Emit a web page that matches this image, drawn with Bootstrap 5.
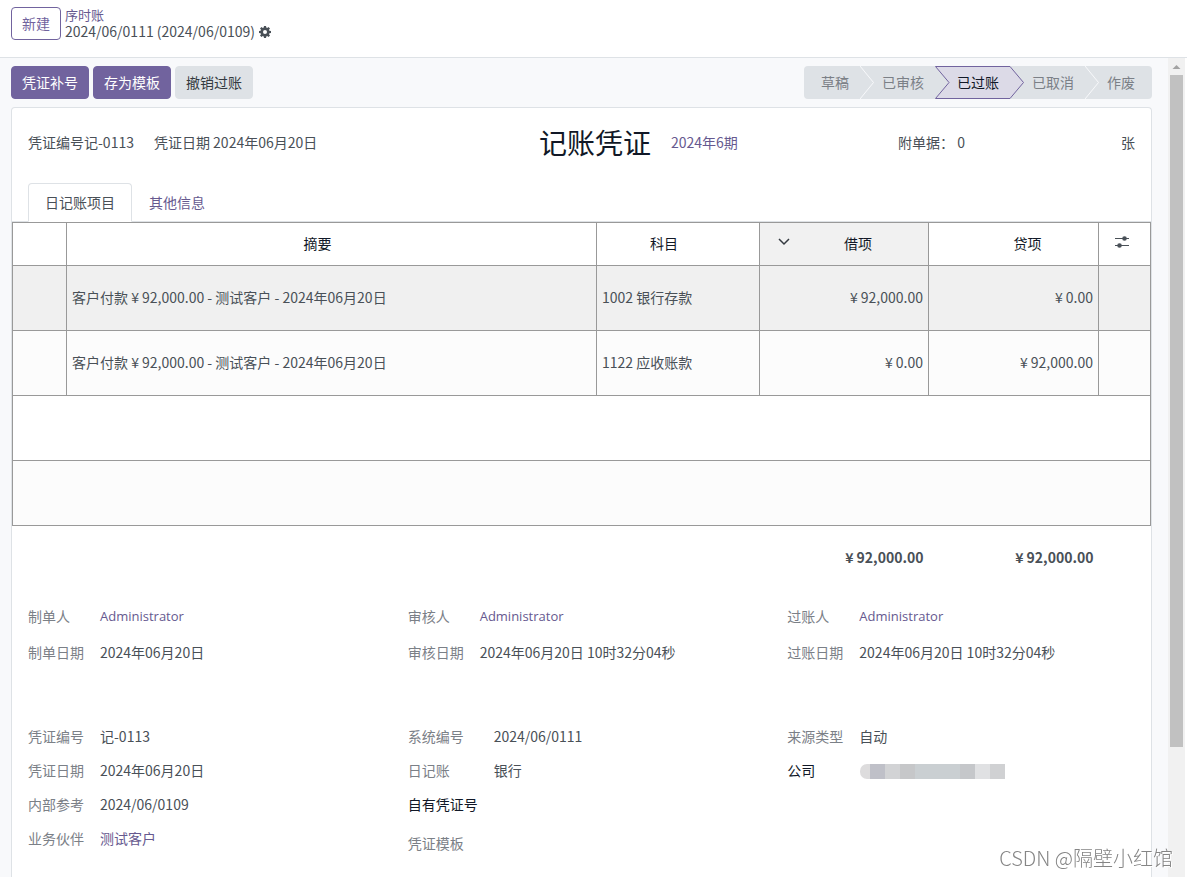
<!DOCTYPE html>
<html lang="zh-CN">
<head>
<meta charset="utf-8">
<meta name="viewport" content="width=device-width, initial-scale=1">
<title>记账凭证</title>
<link href="https://cdn.jsdelivr.net/npm/bootstrap@5.3.0/dist/css/bootstrap.min.css" rel="stylesheet">
<style>
:root { --brand: #71639e; --brand-link: #66598f; --line: #dee2e6; --ink: #495057; --grid: #999; }
body { font-family: "Noto Sans CJK SC", sans-serif; font-size: 14px; line-height: 20px; color: var(--ink); }
a { color: var(--brand-link); text-decoration: none; }
.top-bar { height: 58px; padding: 7px 11px; border-bottom: 1px solid var(--line); gap: 4px; }
.btn { font-size: 14px; line-height: 21px; padding: 5px 10px; border-radius: 4px; white-space: nowrap; }
.btn-brand { --bs-btn-color: #fff; --bs-btn-bg: var(--brand); --bs-btn-border-color: var(--brand); --bs-btn-hover-color: #fff; --bs-btn-hover-bg: #5f5387; }
.btn-brand-outline { --bs-btn-color: var(--brand); --bs-btn-border-color: var(--brand); --bs-btn-bg: #fff; --bs-btn-hover-color: #fff; --bs-btn-hover-bg: var(--brand); }
.btn-soft { --bs-btn-color: #343a40; --bs-btn-bg: var(--line); --bs-btn-border-color: var(--line); --bs-btn-hover-bg: #ced4da; }
.crumbs { line-height: 17px; margin-top: -1px; }
.crumb-parent { font-size: 13px; }
.icon-btn { border: 0; padding: 0; background: none; color: var(--ink); line-height: 1; }
.workspace { background: #f8f9fb; padding: 8px 16px 0 11px; }
.action-group { gap: 4px; }
.status-bar { background: var(--line); border-radius: 4px; height: 33px; }
.status-step { position: relative; border: 0; background: none; padding: 0 11px 2px 22px; color: #7b8087; }
.status-step:first-child { padding-left: 17px; }
.status-step:last-child { padding-right: 17px; }
.status-step svg { position: absolute; top: 0; right: -14px; z-index: 1; }
.status-step span { position: relative; z-index: 2; }
.status-step.current { color: #111827; }
.sheet { margin-top: 8px; background: #fff; border: 1px solid var(--line); border-bottom: 0; border-radius: 4px 4px 0 0; }
.sheet-head { display: grid; grid-template-columns: 511fr 359fr 237fr; align-items: center; height: 67px; padding: 0 16px; }
.sheet-title { font-size: 28px; line-height: 34px; color: #111827; font-weight: 400; margin: 0; }
.gap-20 { gap: 20px; }
.nav-tabs { padding: 0 16px; margin-top: 8px; --bs-nav-tabs-border-radius: 4px; --bs-nav-link-color: var(--brand-link); --bs-nav-tabs-link-active-color: var(--ink); }
.nav-tabs .nav-link { padding: 8px 16px; line-height: 21px; }
.entries { table-layout: fixed; width: 100%; border-collapse: collapse; }
.entries thead th, .entries tbody td { border: 1px solid var(--grid); }
.entries th { font-weight: 400; color: #111827; text-align: center; height: 43px; padding: 0 0 2px; }
.entries td { height: 65px; padding: 0 5px 2px; }
.entries .head-left { padding-right: 28px; }
.entries .head-right { padding-left: 28px; }
.entries .head-options { padding-right: 6px; }
.entries .sorted { background: #f1f1f1; position: relative; }
.sorted svg { position: absolute; left: 18px; top: 15px; }
.row-hover { background: #f0f0f0; }
.row-alt { background: #fcfcfc; }
.col-handle { width: 54px; } .col-account { width: 163px; } .col-debit { width: 169px; } .col-credit { width: 170px; } .col-options { width: 52px; }
.field-area { display: grid; grid-template-columns: repeat(3, minmax(0, 1fr)); column-gap: 32px; padding: 7px 16px 0; }
.field-area + .field-area { padding-top: 49px; }
.fields { display: grid; grid-template-columns: auto 1fr; column-gap: 16px; grid-auto-rows: 34px; align-content: start; align-items: center; margin: 0; }
.fields.roomy { grid-auto-rows: 36px; }
.fields.last-tall { grid-template-rows: repeat(3, 34px) 44px; }
.fields dt { font-weight: 400; color: #7b8087; white-space: nowrap; }
.fields dt.editable { color: #111827; }
.fields dd { margin: 0; }
.user-name { font-family: "Open Sans", sans-serif; font-size: 13px; }
.masked { width: 145px; height: 15px; margin: 4px 0 0 1px; border-radius: 7px 0 0 7px; background: linear-gradient(90deg, #dddcdd 10px, #bfc0c8 10px 25px, #d2d3d5 25px 40px, #c6c7c9 40px 55px, #cacfd2 55px 100px, #c5c7ca 100px 115px, #e0e1e3 115px 130px, #d0d1d3 130px); }
.scroll-track { width: 17px; margin-right: 2px; background: #f1f1f1; padding: 0 2px; }
.scroll-track svg { display: block; margin: 0 auto; }
.scroll-thumb { background: #c1c1c1; height: 82%; }
.watermark { position: fixed; right: 14px; bottom: 7px; z-index: 5; font-size: 20px; line-height: 24px; color: #858585; font-weight: 300; pointer-events: none; text-shadow: 1px 1px 0 #fff; }
</style>
</head>
<body class="vh-100 d-flex flex-column overflow-hidden">
<header class="top-bar d-flex align-items-start flex-shrink-0">
  <button type="button" class="btn btn-brand-outline">新建</button>
  <nav class="crumbs">
    <a class="crumb-parent d-block" href="#">序时账</a>
    <div class="d-flex align-items-center gap-1">
      <span>2024/06/0111 (2024/06/0109)</span>
      <button type="button" class="icon-btn" aria-label="设置">
        <svg class="d-block" width="12" height="12" viewBox="0 0 12 12"><path fill="currentColor" fill-rule="evenodd" d="M5 0h2l.3 1.6.9.4L9.500 1 11 2.500l-1 1.300.4.900L12 5v2l-1.600.3-.4.900 1 1.300L9.500 11l-1.300-1-.9.400L7 12H5l-.3-1.600-.9-.4-1.300 1L1 9.500l1-1.300-.4-.9L0 7V5l1.600-.3.4-.9-1-1.300L2.500 1l1.300 1 .9-.4zM6 4a2 2 0 1 0 0 4 2 2 0 0 0 0-4z"/></svg>
      </button>
    </div>
  </nav>
</header>
<div class="d-flex flex-grow-1 overflow-hidden">
  <main class="workspace flex-grow-1 d-flex flex-column overflow-hidden">
    <div class="d-flex justify-content-between">
      <div class="action-group d-flex">
        <button type="button" class="btn btn-brand">凭证补号</button>
        <button type="button" class="btn btn-brand">存为模板</button>
        <button type="button" class="btn btn-soft">撤销过账</button>
      </div>
      <div class="status-bar d-flex">
        <button type="button" class="status-step"><span>草稿</span><svg width="14" height="33"><path d="M0 0L13.500 16.500 0 33" fill="none" stroke="#f8f9fb"/></svg></button>
        <button type="button" class="status-step"><span>已审核</span></button>
        <button type="button" class="status-step current"><svg width="89" height="33"><path d="M.5.5H75L88.500 16.500 75 32.500H.5L14 16.500z" fill="#dcdae7" stroke="#71639e"/></svg><span>已过账</span></button>
        <button type="button" class="status-step"><span>已取消</span><svg width="14" height="33"><path d="M0 0L13.500 16.500 0 33" fill="none" stroke="#f8f9fb"/></svg></button>
        <button type="button" class="status-step"><span>作废</span></button>
      </div>
    </div>
    <section class="sheet flex-grow-1">
      <div class="sheet-head">
        <div class="d-flex gap-20"><span>凭证编号记-0113</span><span>凭证日期 2024年06月20日</span></div>
        <div class="d-flex align-items-center gap-20"><h1 class="sheet-title">记账凭证</h1><a href="#">2024年6期</a></div>
        <div class="d-flex justify-content-between"><span>附单据： 0</span><span>张</span></div>
      </div>
      <ul class="nav nav-tabs">
        <li class="nav-item"><a class="nav-link active" href="#">日记账项目</a></li>
        <li class="nav-item"><a class="nav-link" href="#">其他信息</a></li>
      </ul>
      <table class="entries">
        <colgroup><col class="col-handle"><col><col class="col-account"><col class="col-debit"><col class="col-credit"><col class="col-options"></colgroup>
        <thead>
          <tr>
            <th></th><th class="head-left">摘要</th><th class="head-left">科目</th>
            <th class="head-right sorted"><svg width="12" height="8"><path d="M1 1l5 5 5-5" fill="none" stroke="#343a40" stroke-width="1.500"/></svg>借项</th>
            <th class="head-right">贷项</th>
            <th class="head-options"><button type="button" class="icon-btn" aria-label="可选列"><svg class="d-block" width="14" height="14" viewBox="0 0 14 14"><path d="M0 3.500h14M0 10.500h14" stroke="currentColor"/><circle cx="9.500" cy="3.500" r="2.300" fill="currentColor"/><circle cx="4.500" cy="10.500" r="2.300" fill="currentColor"/></svg></button></th>
          </tr>
        </thead>
        <tbody>
          <tr class="row-hover"><td></td><td>客户付款 ¥ 92,000.00 - 测试客户 - 2024年06月20日</td><td>1002 银行存款</td><td class="text-end">¥ 92,000.00</td><td class="text-end">¥ 0.00</td><td></td></tr>
          <tr class="row-alt"><td></td><td>客户付款 ¥ 92,000.00 - 测试客户 - 2024年06月20日</td><td>1122 应收账款</td><td class="text-end">¥ 0.00</td><td class="text-end">¥ 92,000.00</td><td></td></tr>
          <tr><td colspan="6"></td></tr>
          <tr class="row-alt"><td colspan="6"></td></tr>
        </tbody>
        <tfoot>
          <tr class="fw-bold"><td colspan="3"></td><td class="text-end">¥ 92,000.00</td><td class="text-end">¥ 92,000.00</td><td></td></tr>
        </tfoot>
      </table>
      <div class="field-area">
        <dl class="fields roomy"><dt>制单人</dt><dd><a class="user-name" href="#">Administrator</a></dd><dt>制单日期</dt><dd>2024年06月20日</dd></dl>
        <dl class="fields roomy"><dt>审核人</dt><dd><a class="user-name" href="#">Administrator</a></dd><dt>审核日期</dt><dd>2024年06月20日 10时32分04秒</dd></dl>
        <dl class="fields roomy"><dt>过账人</dt><dd><a class="user-name" href="#">Administrator</a></dd><dt>过账日期</dt><dd>2024年06月20日 10时32分04秒</dd></dl>
      </div>
      <div class="field-area">
        <dl class="fields"><dt>凭证编号</dt><dd>记-0113</dd><dt>凭证日期</dt><dd>2024年06月20日</dd><dt>内部参考</dt><dd>2024/06/0109</dd><dt>业务伙伴</dt><dd><a href="#">测试客户</a></dd></dl>
        <dl class="fields last-tall"><dt>系统编号</dt><dd>2024/06/0111</dd><dt>日记账</dt><dd>银行</dd><dt class="editable">自有凭证号</dt><dd></dd><dt>凭证模板</dt><dd></dd></dl>
        <dl class="fields"><dt>来源类型</dt><dd>自动</dd><dt class="editable">公司</dt><dd><div class="masked"></div></dd></dl>
      </div>
    </section>
  </main>
  <div class="scroll-track flex-shrink-0" aria-hidden="true">
    <svg width="9" height="17"><path d="M.5 11h8l-4-4z" fill="#a3a3a3"/></svg>
    <div class="scroll-thumb"></div>
  </div>
</div>
<div class="watermark">CSDN @隔壁小红馆</div>
<script src="https://cdn.jsdelivr.net/npm/bootstrap@5.3.0/dist/js/bootstrap.bundle.min.js"></script>
</body>
</html>
